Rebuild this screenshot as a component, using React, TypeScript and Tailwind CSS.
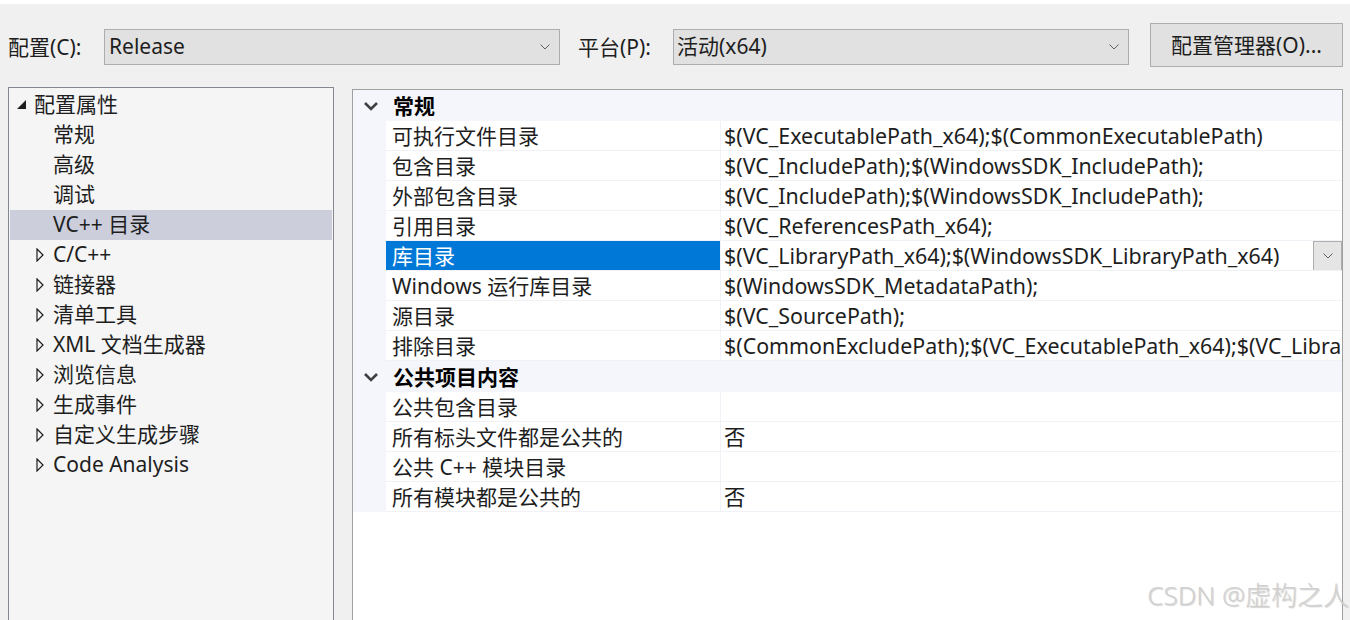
import React from "react";

const FONT = { fontFamily: '"Noto Sans", "Noto Sans CJK SC", sans-serif' };

function Chevron({ className = "" }: { className?: string }) {
  return (
    <svg width="10" height="6" viewBox="0 0 10 6" className={className}>
      <polyline points="0.5,0.5 5,5 9.5,0.5" fill="none" stroke="#606060" strokeWidth="1" />
    </svg>
  );
}

function Collapsed() {
  return (
    <svg width="8" height="14" viewBox="0 0 8 14" className="shrink-0">
      <polygon points="1,1 7,7 1,13" fill="none" stroke="#1e1e1e" strokeWidth="1.2" />
    </svg>
  );
}

function Expanded() {
  return (
    <svg width="9" height="9" viewBox="0 0 9 9" className="shrink-0">
      <polygon points="0,9 9,9 9,0" fill="#1e1e1e" />
    </svg>
  );
}

function CatChevron() {
  return (
    <svg width="16" height="10" viewBox="0 0 16 10">
      <polyline points="2,2 8,8 14,2" fill="none" stroke="#404040" strokeWidth="2.6" />
    </svg>
  );
}

const tree: { label: string; kind: "child" | "collapsed" }[] = [
  { label: "常规", kind: "child" },
  { label: "高级", kind: "child" },
  { label: "调试", kind: "child" },
  { label: "VC++ 目录", kind: "child" },
  { label: "C/C++", kind: "collapsed" },
  { label: "链接器", kind: "collapsed" },
  { label: "清单工具", kind: "collapsed" },
  { label: "XML 文档生成器", kind: "collapsed" },
  { label: "浏览信息", kind: "collapsed" },
  { label: "生成事件", kind: "collapsed" },
  { label: "自定义生成步骤", kind: "collapsed" },
  { label: "Code Analysis", kind: "collapsed" },
];

type Row = { name: string; value: string; selected?: boolean };

const general: Row[] = [
  { name: "可执行文件目录", value: "$(VC_ExecutablePath_x64);$(CommonExecutablePath)" },
  { name: "包含目录", value: "$(VC_IncludePath);$(WindowsSDK_IncludePath);" },
  { name: "外部包含目录", value: "$(VC_IncludePath);$(WindowsSDK_IncludePath);" },
  { name: "引用目录", value: "$(VC_ReferencesPath_x64);" },
  { name: "库目录", value: "$(VC_LibraryPath_x64);$(WindowsSDK_LibraryPath_x64)", selected: true },
  { name: "Windows 运行库目录", value: "$(WindowsSDK_MetadataPath);" },
  { name: "源目录", value: "$(VC_SourcePath);" },
  { name: "排除目录", value: "$(CommonExcludePath);$(VC_ExecutablePath_x64);$(VC_LibraryPath_x64);" },
];

const publicItems: Row[] = [
  { name: "公共包含目录", value: "" },
  { name: "所有标头文件都是公共的", value: "否" },
  { name: "公共 C++ 模块目录", value: "" },
  { name: "所有模块都是公共的", value: "否" },
];

function Category({ title }: { title: string }) {
  return (
    <div className="flex h-[31px] items-center bg-[#f4f6fb]">
      <div className="flex w-[33px] shrink-0 justify-center pl-[2px] pt-[1px]">
        <CatChevron />
      </div>
      <span className="pl-[7px] pt-[2px] text-[21px] font-bold text-black">{title}</span>
    </div>
  );
}

function PropRow({ row }: { row: Row }) {
  return (
    <div className="flex h-[30px] bg-[#f4f6fb]">
      <div className="w-[33px] shrink-0" />
      <div
        className={`flex w-[334px] shrink-0 items-center border-b border-[#f0f2f7] pl-[6px] pt-[2px] text-[21px] ${
          row.selected ? "bg-[#0078d7] text-white" : "bg-white text-[#1e1e1e]"
        }`}
      >
        {row.name}
      </div>
      <div className="relative flex min-w-0 flex-1 items-center overflow-hidden whitespace-nowrap border-b border-l border-[#f0f2f7] bg-white pl-[3px] pt-[2px] text-[21.4px] text-[#1e1e1e]">
        {row.value}
        {row.selected && (
          <div className="absolute right-0 top-0 flex h-[30px] w-[29px] items-center justify-center border border-[#adadad] bg-[#e5e5e5]">
            <Chevron />
          </div>
        )}
      </div>
    </div>
  );
}

export default function App() {
  return (
    <div className="relative h-[620px] w-[1350px] overflow-hidden bg-[#f0f0f0] text-[#1e1e1e]" style={FONT}>
      <div className="h-[4px] bg-white" />
      {/* Top bar */}
      <div className="flex h-[83px] items-start">
        <div className="ml-[8px] mt-[24px] flex items-center">
          <span className="w-[96px] pt-[1px] text-[21px] leading-[36px]">配置(C):</span>
          <div className="flex h-[36px] w-[456px] items-center justify-between border border-[#adadad] bg-[#e1e1e1] pl-[4px] pr-[9px]">
            <span className="pt-[1px] text-[21px]">Release</span>
            <Chevron />
          </div>
          <span className="ml-[18px] w-[95px] pt-[1px] text-[21px] leading-[36px]">平台(P):</span>
          <div className="flex h-[36px] w-[456px] items-center justify-between border border-[#adadad] bg-[#e1e1e1] pl-[3px] pr-[9px]">
            <span className="pt-[1px] text-[21px]">活动(x64)</span>
            <Chevron />
          </div>
        </div>
        <div className="ml-[21px] mt-[19px] flex h-[44px] w-[193px] items-center justify-center border border-[#adadad] bg-[#e1e1e1] pt-[1px] text-[21px]">
          配置管理器(O)...
        </div>
      </div>
      {/* Main */}
      <div className="flex items-start">
        <div className="ml-[8px] h-[540px] w-[326px] border border-[#828790] bg-[#f5f5f5] pt-[1px]">
          <div className="flex h-[31px] items-center pl-[8px] text-[21px]">
            <Expanded />
            <span className="ml-[8px]">配置属性</span>
          </div>
          {tree.map((t) => (
            <div
              key={t.label}
              className={`mx-[1px] flex h-[30px] items-center text-[21px] ${
                t.label === "VC++ 目录" ? "bg-[#cccedb]" : ""
              }`}
            >
              {t.kind === "collapsed" ? (
                <div className="flex w-[43px] shrink-0 justify-end pr-[9px]">
                  <Collapsed />
                </div>
              ) : (
                <div className="w-[43px] shrink-0" />
              )}
              <span>{t.label}</span>
            </div>
          ))}
        </div>
        <div className="ml-[18px] mt-[2px] h-[540px] w-[991px] border border-[#a0a0a0] bg-white">
          <Category title="常规" />
          {general.map((r) => (
            <PropRow key={r.name} row={r} />
          ))}
          <Category title="公共项目内容" />
          {publicItems.map((r) => (
            <PropRow key={r.name} row={r} />
          ))}
        </div>
      </div>
      <div
        className="absolute bottom-[5px] right-[1px] text-[26px] font-light text-[#d0d0d0]"
        style={{ textShadow: "1px 1px 1px rgba(0,0,0,0.18)" }}
      >
        CSDN @虚构之人
      </div>
    </div>
  );
}
